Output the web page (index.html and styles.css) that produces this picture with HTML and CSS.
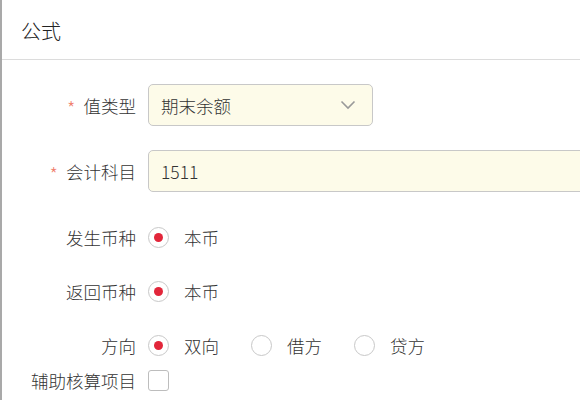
FILE: index.html
```html
<!DOCTYPE html>
<html lang="zh-CN">
<head>
    <meta charset="UTF-8">
    <title>公式</title>
    <link rel="stylesheet" href="styles.css">
</head>
<body>
    <div class="modal">
        <div class="modal-header">公式</div>
        <form class="modal-body">
            <div class="form-row">
                <label class="form-label"><span class="required">*</span>值类型</label>
                <div class="select-box">
                    <span>期末余额</span>
                    <svg class="arrow" width="16" height="10" viewBox="0 0 16 10">
                        <path d="M1.5 1.5 L8 8 L14.5 1.5" fill="none" stroke="#999" stroke-width="1.6"/>
                    </svg>
                </div>
            </div>
            <div class="form-row">
                <label class="form-label"><span class="required">*</span>会计科目</label>
                <input class="text-input" type="text" value="1511">
            </div>
            <div class="form-row radio-row">
                <label class="form-label">发生币种</label>
                <div class="radio-group">
                    <span class="radio-item"><span class="radio checked"></span>本币</span>
                </div>
            </div>
            <div class="form-row radio-row">
                <label class="form-label">返回币种</label>
                <div class="radio-group">
                    <span class="radio-item"><span class="radio checked"></span>本币</span>
                </div>
            </div>
            <div class="form-row radio-row last-radio">
                <label class="form-label">方向</label>
                <div class="radio-group">
                    <span class="radio-item"><span class="radio checked"></span>双向</span>
                    <span class="radio-item"><span class="radio"></span>借方</span>
                    <span class="radio-item"><span class="radio"></span>贷方</span>
                </div>
            </div>
            <div class="form-row check-row">
                <label class="form-label">辅助核算项目</label>
                <span class="checkbox"></span>
            </div>
        </form>
    </div>
</body>
</html>
```

FILE: styles.css
```css
html, body {
    margin: 0;
    height: 100%;
    overflow: hidden;
}
body {
    background-color: #a9a9a9;
    font-family: "Noto Sans CJK SC", "Noto Sans", sans-serif;
    font-weight: 300;
    color: #333;
}
.modal {
    margin-left: 2px;
    height: 100%;
    overflow: hidden;
    background: white;
}
.modal-header {
    height: 59px;
    line-height: 62px;
    padding-left: 19px;
    font-size: 20px;
    color: #222;
    border-bottom: 1px solid #dcdcdc;
}
.modal-body {
    padding-top: 24px;
    font-size: 17.5px;
}
.form-row {
    display: flex;
    align-items: center;
    height: 42px;
    margin-bottom: 24px;
}
.radio-row {
    margin-bottom: 12px;
}
.last-radio {
    margin-bottom: 2px;
}
.check-row {
    height: 24px;
}
.form-label {
    flex: none;
    width: 134px;
    padding-right: 12px;
    text-align: right;
    white-space: nowrap;
}
.required {
    display: inline-block;
    color: #f0806e;
    font-size: 19px;
    line-height: 1;
    vertical-align: -3px;
    margin-right: 8px;
}
.select-box {
    flex: none;
    box-sizing: border-box;
    width: 225px;
    height: 42px;
    display: flex;
    align-items: center;
    justify-content: space-between;
    padding: 0 16px 0 12px;
    background-color: #fdfbe9;
    border: 1px solid #c8c8c8;
    border-radius: 5px;
}
.text-input {
    flex: none;
    box-sizing: border-box;
    width: 480px;
    height: 42px;
    padding: 0 12px;
    font: inherit;
    color: #333;
    background-color: #fdfbe9;
    border: 1px solid #c8c8c8;
    border-radius: 5px;
    outline: none;
}
.radio-group {
    display: flex;
    align-items: center;
}
.radio-item {
    display: flex;
    align-items: center;
    margin-right: 32px;
}
.radio {
    box-sizing: border-box;
    width: 21px;
    height: 21px;
    margin-right: 15px;
    border: 1px solid #c8c8c8;
    border-radius: 50%;
    display: flex;
    align-items: center;
    justify-content: center;
}
.radio.checked::after {
    content: "";
    width: 9px;
    height: 9px;
    border-radius: 50%;
    background-color: #e2263a;
}
.checkbox {
    box-sizing: border-box;
    width: 21px;
    height: 21px;
    border: 1px solid #bdbdbd;
    border-radius: 3px;
}
```
